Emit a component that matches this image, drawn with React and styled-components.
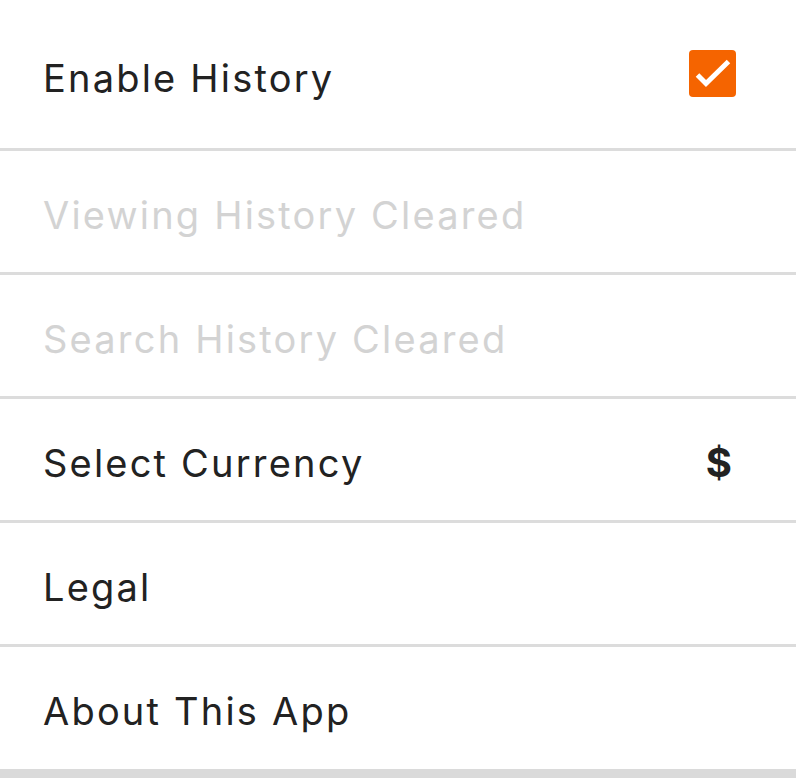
import styled, { createGlobalStyle } from "styled-components";

const Global = createGlobalStyle`
  body {
    margin: 0;
    background: #fff;
    font-family: Inter, "Noto Sans", sans-serif;
  }
`;

const List = styled.div`
  width: 796px;
  height: 778px;
  overflow: hidden;
  display: flex;
  flex-direction: column;
  background: #fff;
`;

const Row = styled.div`
  display: flex;
  align-items: center;
  justify-content: space-between;
  box-sizing: border-box;
  height: ${(p) => (p.$first ? "148px" : "121px")};
  padding: ${(p) => (p.$first ? "8px 60px 0 43px" : "6px 64px 0 43px")};
  flex-shrink: 0;
`;

const Divider = styled.div`
  height: 3px;
  background: #dcdcdc;
  flex-shrink: 0;
`;

const Label = styled.span`
  font-size: 38px;
  letter-spacing: 2.2px;
  color: ${(p) => (p.$disabled ? "#d3d3d3" : "#222222")};
`;

const Box = styled.div`
  width: 47px;
  height: 47px;
  margin-bottom: 10px;
  border-radius: 4px;
  background: #f56400;
  display: flex;
`;

const Symbol = styled.span`
  font-size: 40px;
  font-weight: 700;
  color: #222;
`;

const Footer = styled.div`
  flex: 1;
  display: flex;
  flex-direction: column;
  justify-content: flex-end;
`;

const Band = styled.div`
  height: 9px;
  background: #dadada;
`;

export default function App() {
  return (
    <List>
      <Global />
      <Row $first>
        <Label>Enable History</Label>
        <Box>
          <svg width="47" height="47" viewBox="0 0 47 47">
            <path d="M8.5 25 L17 33.5 L39.5 11.5" fill="none" stroke="#fff" strokeWidth="5" />
          </svg>
        </Box>
      </Row>
      <Divider />
      <Row>
        <Label $disabled>Viewing History Cleared</Label>
      </Row>
      <Divider />
      <Row>
        <Label $disabled>Search History Cleared</Label>
      </Row>
      <Divider />
      <Row>
        <Label>Select Currency</Label>
        <Symbol>$</Symbol>
      </Row>
      <Divider />
      <Row>
        <Label>Legal</Label>
      </Row>
      <Divider />
      <Row>
        <Label>About This App</Label>
      </Row>
      <Footer>
        <Band />
      </Footer>
    </List>
  );
}
